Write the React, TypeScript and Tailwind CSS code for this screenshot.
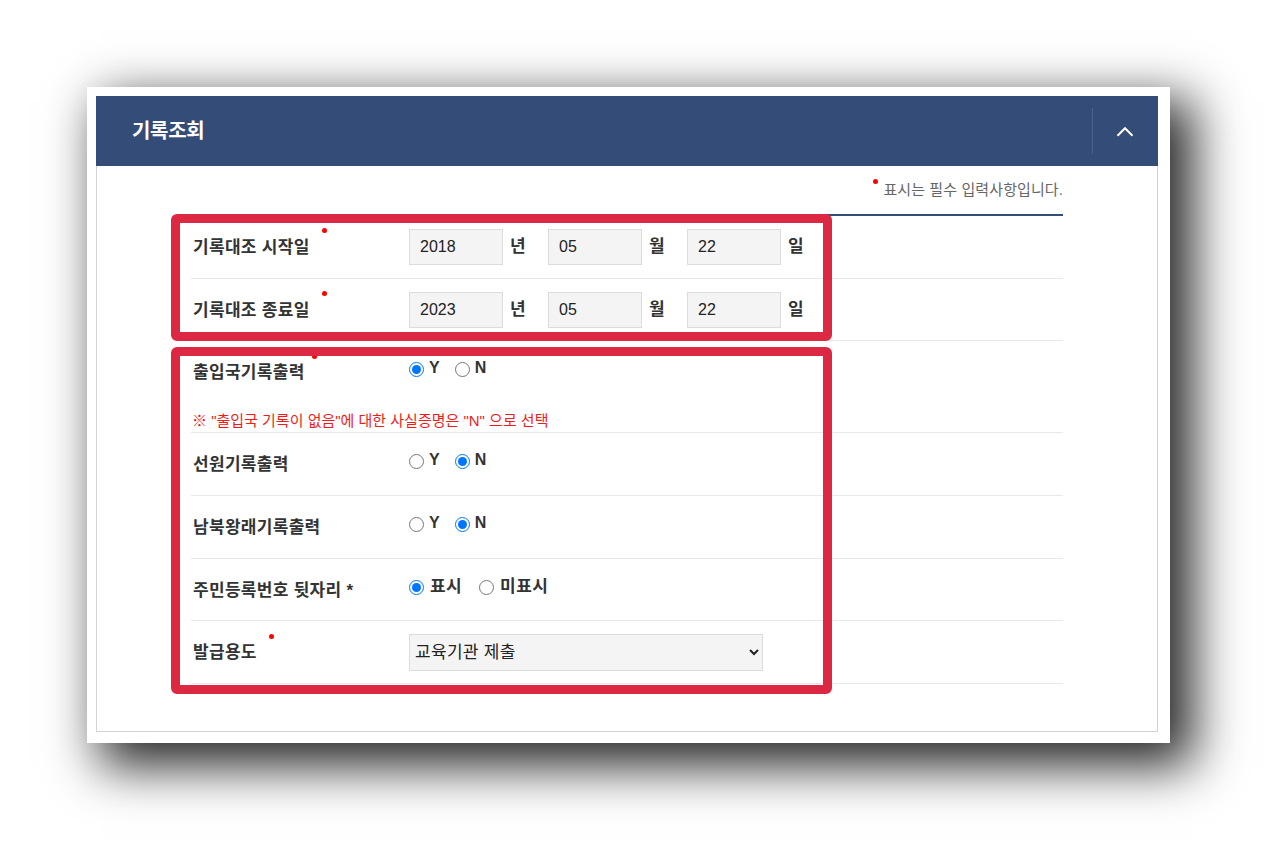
import React from "react";

const FONT = {
  fontFamily: '"Liberation Sans", "Noto Sans CJK KR", sans-serif',
};

function Dot({ className }: { className: string }) {
  return (
    <span
      className={`absolute w-[5px] h-[5px] rounded-full bg-[#ff0000] ${className}`}
    />
  );
}

function Label({
  text,
  dot,
}: {
  text: string;
  dot?: string;
}) {
  return (
    <div className="w-[218px] pl-[2px] shrink-0">
      <span className="relative inline-block text-[17px] leading-[24px] tracking-[0.3px] font-bold text-[#333] mt-[2px]">
        {text}
        {dot && <Dot className={dot} />}
      </span>
    </div>
  );
}

function DateInputs({ y, m, d }: { y: string; m: string; d: string }) {
  const inp =
    "w-[94px] h-[36px] bg-[#f4f4f4] border border-[#dcdcdc] px-[10px] text-[16px] text-[#222] outline-none";
  const unit = "ml-[7px] mr-[22px] w-[16px] text-[17px] font-bold text-[#333]";
  return (
    <div className="flex items-center">
      <input className={inp} defaultValue={y} readOnly />
      <span className={unit}>년</span>
      <input className={inp} defaultValue={m} readOnly />
      <span className={unit}>월</span>
      <input className={inp} defaultValue={d} readOnly />
      <span className="ml-[7px] text-[17px] font-bold text-[#333]">일</span>
    </div>
  );
}

function Radios({
  name,
  options,
  checked,
  gap,
  kor,
}: {
  name: string;
  options: string[];
  checked: number;
  gap: string;
  kor?: boolean;
}) {
  return (
    <div className="flex items-center mb-[5px]">
      {options.map((o, i) => (
        <label
          key={o}
          className={`flex items-center ${i > 0 ? gap : ""}`}
        >
          <input
            type="radio"
            name={name}
            defaultChecked={i === checked}
            className="w-[15px] h-[15px] m-0"
          />
          <span
            className={`${kor ? "ml-[6px] text-[17px] tracking-[0.4px]" : "ml-[5px] text-[16px] mb-[3px]"} font-bold text-[#333]`}
          >
            {o}
          </span>
        </label>
      ))}
    </div>
  );
}

export default function App() {
  return (
    <div
      className="w-[1279px] h-[852px] bg-white pt-[87px] pl-[87px] overflow-hidden"
      style={FONT}
    >
      <div className="w-[1083px] h-[656px] bg-white pt-[9px] pl-[9px] shadow-[18px_18px_48px_5px_rgba(0,0,0,0.85)]">
        <div className="w-[1062px]">
          {/* Header */}
          <div className="h-[70px] bg-[#344c78] flex items-center justify-between">
            <h2 className="pl-[36px] text-[20px] font-bold text-white tracking-[-0.3px]">
              기록조회
            </h2>
            <div className="flex items-center">
              <div className="w-px h-[46px] bg-[#4b6291]" />
              <div className="w-[65px] flex justify-center pr-[2px]">
                <svg width="18" height="11" viewBox="0 0 18 11">
                  <path
                    d="M1.5 9.8 L9 2.2 L16.5 9.8"
                    stroke="white"
                    strokeWidth="2"
                    fill="none"
                  />
                </svg>
              </div>
            </div>
          </div>

          {/* Body */}
          <div className="h-[566px] border-x border-b border-[#d3d3d3] pt-[14px]">
            <div className="mx-[94px]">
              <div className="flex justify-end h-[20px] text-[15px] leading-[20px] tracking-[0.1px] text-[#666]">
                <span className="w-[5px] h-[5px] rounded-full bg-[#ff0000] mt-[-1px] mr-[5px]" />
                <span>표시는 필수 입력사항입니다.</span>
              </div>

              <div className="relative mt-[14px] border-t-2 border-[#344c78]">
                {/* Row 1 */}
                <div className="h-[63px] flex items-center border-b border-[#e8e8e8]">
                  <Label text="기록대조 시작일" dot="-right-[17px] -top-[8px]" />
                  <DateInputs y="2018" m="05" d="22" />
                </div>
                {/* Row 2 */}
                <div className="h-[62px] flex items-center border-b border-[#e8e8e8]">
                  <Label text="기록대조 종료일" dot="-right-[17px] -top-[8px]" />
                  <DateInputs y="2023" m="05" d="22" />
                </div>
                {/* Row 3 */}
                <div className="h-[92px] flex flex-col border-b border-[#e8e8e8]">
                  <div className="h-[62px] flex items-center">
                    <Label text="출입국기록출력" dot="-right-[12px] -top-[7px]" />
                    <Radios name="r1" options={["Y", "N"]} checked={0} gap="ml-[15px]" />
                  </div>
                  <div className="mt-[8px] pl-[1px] text-[15px] leading-[20px] text-[#f01c1c]">
                    ※ "출입국 기록이 없음"에 대한 사실증명은 "N" 으로 선택
                  </div>
                </div>
                {/* Row 4 */}
                <div className="h-[63px] flex items-center border-b border-[#e8e8e8]">
                  <Label text="선원기록출력" />
                  <Radios name="r2" options={["Y", "N"]} checked={1} gap="ml-[15px]" />
                </div>
                {/* Row 5 */}
                <div className="h-[63px] flex items-center border-b border-[#e8e8e8]">
                  <Label text="남북왕래기록출력" />
                  <Radios name="r3" options={["Y", "N"]} checked={1} gap="ml-[15px]" />
                </div>
                {/* Row 6 */}
                <div className="h-[62px] flex items-center border-b border-[#e8e8e8]">
                  <Label text="주민등록번호 뒷자리 *" />
                  <Radios name="r4" options={["표시", "미표시"]} checked={0} gap="ml-[17px]" kor />
                </div>
                {/* Row 7 */}
                <div className="h-[63px] flex items-center border-b border-[#e8e8e8]">
                  <Label text="발급용도" dot="-right-[17px] -top-[7px]" />
                  <select
                    className="w-[354px] h-[37px] bg-[#f4f4f4] border border-[#dcdcdc] pl-[1px] text-[17px] tracking-[0.3px] text-[#222] outline-none"
                    defaultValue="edu"
                  >
                    <option value="edu">교육기관 제출</option>
                  </select>
                </div>

                {/* Red annotation boxes */}
                <div className="absolute left-[-20px] top-[-2px] w-[661px] h-[127px] border-[9px] border-[#dd2844] rounded-[6px] pointer-events-none" />
                <div className="absolute left-[-20px] top-[131px] w-[661px] h-[347px] border-[9px] border-[#dd2844] rounded-[6px] pointer-events-none" />
              </div>
            </div>
          </div>
        </div>
      </div>
    </div>
  );
}
